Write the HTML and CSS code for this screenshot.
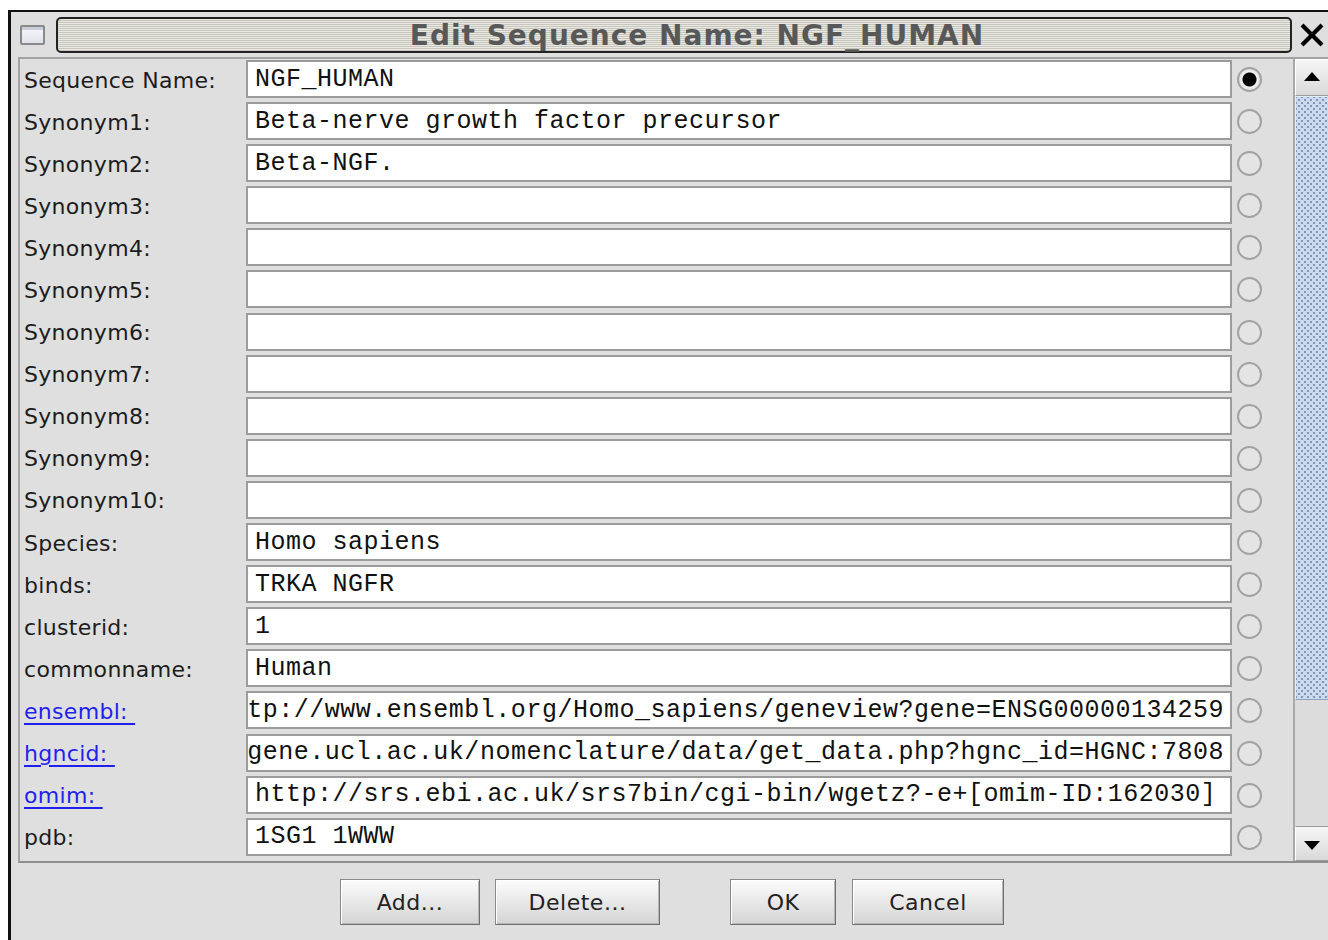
FILE: index.html
```html
<!DOCTYPE html>
<html>
<head>
<meta charset="utf-8">
<title>Edit Sequence Name</title>
<link rel="stylesheet" href="styles.css">
</head>
<body>
<div class="window">
  <div class="titlebar">
    <div class="win-icon"><span class="win-icon-bar"></span></div>
    <div class="title-grip"><span class="title-text">Edit Sequence Name: NGF_HUMAN</span></div>
    <svg class="close-x" width="26" height="26" viewBox="0 0 26 26"><path d="M3 3 L23 23 M23 3 L3 23" stroke="#000" stroke-width="4.2" fill="none"/></svg>
  </div>

  <div class="scrollpane">
    <div class="viewport">
      <div class="row"><span class="label">Sequence Name:</span><div class="field">NGF_HUMAN</div><span class="radio checked"></span></div>
      <div class="row"><span class="label">Synonym1:</span><div class="field">Beta-nerve growth factor precursor</div><span class="radio"></span></div>
      <div class="row"><span class="label">Synonym2:</span><div class="field">Beta-NGF.</div><span class="radio"></span></div>
      <div class="row"><span class="label">Synonym3:</span><div class="field"></div><span class="radio"></span></div>
      <div class="row"><span class="label">Synonym4:</span><div class="field"></div><span class="radio"></span></div>
      <div class="row"><span class="label">Synonym5:</span><div class="field"></div><span class="radio"></span></div>
      <div class="row"><span class="label">Synonym6:</span><div class="field"></div><span class="radio"></span></div>
      <div class="row"><span class="label">Synonym7:</span><div class="field"></div><span class="radio"></span></div>
      <div class="row"><span class="label">Synonym8:</span><div class="field"></div><span class="radio"></span></div>
      <div class="row"><span class="label">Synonym9:</span><div class="field"></div><span class="radio"></span></div>
      <div class="row"><span class="label">Synonym10:</span><div class="field"></div><span class="radio"></span></div>
      <div class="row"><span class="label">Species:</span><div class="field">Homo sapiens</div><span class="radio"></span></div>
      <div class="row"><span class="label">binds:</span><div class="field">TRKA NGFR</div><span class="radio"></span></div>
      <div class="row"><span class="label">clusterid:</span><div class="field">1</div><span class="radio"></span></div>
      <div class="row"><span class="label">commonname:</span><div class="field">Human</div><span class="radio"></span></div>
      <div class="row"><a class="label link" href="#">ensembl:&nbsp;</a><div class="field end"><span>http://www.ensembl.org/Homo_sapiens/geneview?gene=ENSG00000134259</span></div><span class="radio"></span></div>
      <div class="row"><a class="label link" href="#">hgncid:&nbsp;</a><div class="field end"><span>http://www.gene.ucl.ac.uk/nomenclature/data/get_data.php?hgnc_id=HGNC:7808</span></div><span class="radio"></span></div>
      <div class="row"><a class="label link" href="#">omim:&nbsp;</a><div class="field">http://srs.ebi.ac.uk/srs7bin/cgi-bin/wgetz?-e+[omim-ID:162030]</div><span class="radio"></span></div>
      <div class="row"><span class="label">pdb:</span><div class="field">1SG1 1WWW</div><span class="radio"></span></div>
    </div>
    <div class="scrollbar">
      <div class="sb-btn"><svg width="16" height="9" viewBox="0 0 16 9"><path d="M0 9 L8 0 L16 9 Z" fill="#000"/></svg></div>
      <div class="sb-thumb"></div>
      <div class="sb-track"></div>
      <div class="sb-btn down"><svg width="16" height="9" viewBox="0 0 16 9"><path d="M0 0 L16 0 L8 9 Z" fill="#000"/></svg></div>
    </div>
  </div>

  <div class="buttons">
    <div class="btn-group">
      <button class="btn btn-add">Add...</button>
      <button class="btn btn-delete">Delete...</button>
    </div>
    <div class="btn-group">
      <button class="btn btn-ok">OK</button>
      <button class="btn btn-cancel">Cancel</button>
    </div>
  </div>
</div>
</body>
</html>
```

FILE: styles.css
```css
html, body {
  margin: 0;
  padding: 0;
  background: #ffffff;
  width: 1328px;
  height: 940px;
  overflow: hidden;
}

.window {
  margin: 10px 0 0 8px;
  width: 1345px;
  height: 960px;
  border-left: 3px solid #111;
  border-top: 2px solid #111;
  background: #dfdfdf;
  display: flex;
  flex-direction: column;
  overflow: hidden;
  font-family: "DejaVu Sans", sans-serif;
}

/* ---- title bar ---- */
.titlebar {
  height: 44px;
  display: flex;
  align-items: center;
  padding-top: 1px;
  box-sizing: border-box;
}

.win-icon {
  margin-left: 9px;
  width: 25px;
  height: 20px;
  box-sizing: border-box;
  border: 2px solid #8a8a8a;
  border-radius: 2px;
  background: linear-gradient(#f7f8fb, #dfe3ea);
  display: flex;
  flex-direction: column;
}

.win-icon-bar {
  height: 3px;
  background: #c9d0dc;
}

.title-grip {
  margin-left: 11px;
  width: 1236px;
  height: 36px;
  box-sizing: border-box;
  border: 2px solid #222;
  border-radius: 5px;
  background: repeating-linear-gradient(to bottom, #e9e9e2 0px, #e9e9e2 1px, #c6c6be 1px, #c6c6be 2px);
  display: flex;
  align-items: center;
  justify-content: center;
  padding-left: 46px;
}

.title-text {
  font-family: "DejaVu Sans", sans-serif;
  font-weight: bold;
  font-size: 28px;
  letter-spacing: 1px;
  color: #585858;
  line-height: 1;
  padding-top: 2px;
}

.close-x {
  margin-left: 7px;
  flex: none;
}

/* ---- scroll pane with the property rows ---- */
.scrollpane {
  margin: 1px 0 0 7px;
  height: 806px;
  box-sizing: border-box;
  border-top: 2px solid #a3a3a3;
  border-left: 2px solid #a3a3a3;
  border-bottom: 2px solid #8e8e8e;
  display: flex;
}

.viewport {
  width: 1273px;
  flex: none;
  overflow: hidden;
}

.row {
  height: 42.1px;
  display: grid;
  grid-template-columns: 226px 986px 61px;
  align-items: start;
}

.label {
  height: 40px;
  margin-top: 1px;
  display: flex;
  align-items: center;
  padding-left: 4px;
  font-size: 22px;
  letter-spacing: 0.3px;
  color: #1c1c1c;
  white-space: nowrap;
}

.link {
  color: #1f1fee;
  text-decoration: underline;
  text-decoration-thickness: 2px;
  text-underline-offset: 4px;
  align-self: start;
}

.field {
  height: 38px;
  margin-top: 1px;
  box-sizing: border-box;
  border: 2px solid #9c9c9c;
  background: #fff;
  padding: 0 6px 0 7px;
  display: flex;
  align-items: center;
  overflow: hidden;
  white-space: nowrap;
  font-family: "Liberation Mono", monospace;
  font-size: 25px;
  letter-spacing: 0.5px;
  color: #111;
}

.field.end {
  justify-content: flex-end;
}

.field.end span {
  flex: none;
}

.radio {
  width: 25px;
  height: 25px;
  margin: 8px 0 0 5px;
  box-sizing: border-box;
  border: 2px solid #a2a2a2;
  border-radius: 50%;
  background: #e4e4e4;
}

.radio.checked {
  background: radial-gradient(circle, #000 0 6.5px, #f0f0f0 7.5px 8.5px, #e4e4e4 9.5px);
}

/* ---- vertical scrollbar ---- */
.scrollbar {
  width: 40px;
  flex: none;
  border-left: 2px solid #a9a9a9;
  display: flex;
  flex-direction: column;
}

.sb-btn {
  height: 37px;
  flex: none;
  box-sizing: border-box;
  border: 1px solid #9a9a9a;
  border-top-color: #fff;
  border-left-color: #fff;
  background: linear-gradient(#f6f6f6, #d9d9d9);
  display: flex;
  align-items: center;
  padding-left: 8px;
}

.sb-btn svg {
  margin-top: -2px;
}

.sb-btn.down {
  height: 35px;
  border-top: 1px solid #9a9a9a;
}

.sb-btn.down svg {
  margin-top: 4px;
}

.sb-thumb {
  height: 604px;
  flex: none;
  box-sizing: border-box;
  border: 1px solid #8ea2bf;
  border-top-color: #e6eef8;
  border-left-color: #e6eef8;
  background-color: #cbdaee;
  background-image:
    radial-gradient(circle, #8496b3 0.9px, transparent 1.3px),
    radial-gradient(circle, #8496b3 0.9px, transparent 1.3px);
  background-size: 6px 6px, 6px 6px;
  background-position: 0 0, 3px 3px;
}

.sb-track {
  flex: 1;
  background: #dcdcdc;
}

/* ---- button row ---- */
.buttons {
  display: flex;
  gap: 70px;
  padding: 16px 0 0 329px;
}

.btn-group {
  display: flex;
  gap: 15px;
}

.btn-group + .btn-group {
  gap: 16px;
}

.btn {
  height: 46px;
  padding: 0;
  box-sizing: border-box;
  border: 1px solid #8a8a8a;
  border-right-color: #6f6f6f;
  border-bottom-color: #6f6f6f;
  box-shadow: inset 1px 1px 0 #fff, inset -1px -1px 0 #b8b8b8;
  background: linear-gradient(#fcfcfc, #d4d4d4);
  font-family: "DejaVu Sans", sans-serif;
  font-size: 22px;
  letter-spacing: 0.5px;
  color: #222;
  border-radius: 0;
}

.btn-add { width: 140px; }
.btn-delete { width: 165px; }
.btn-ok { width: 106px; }
.btn-cancel { width: 152px; }
```
